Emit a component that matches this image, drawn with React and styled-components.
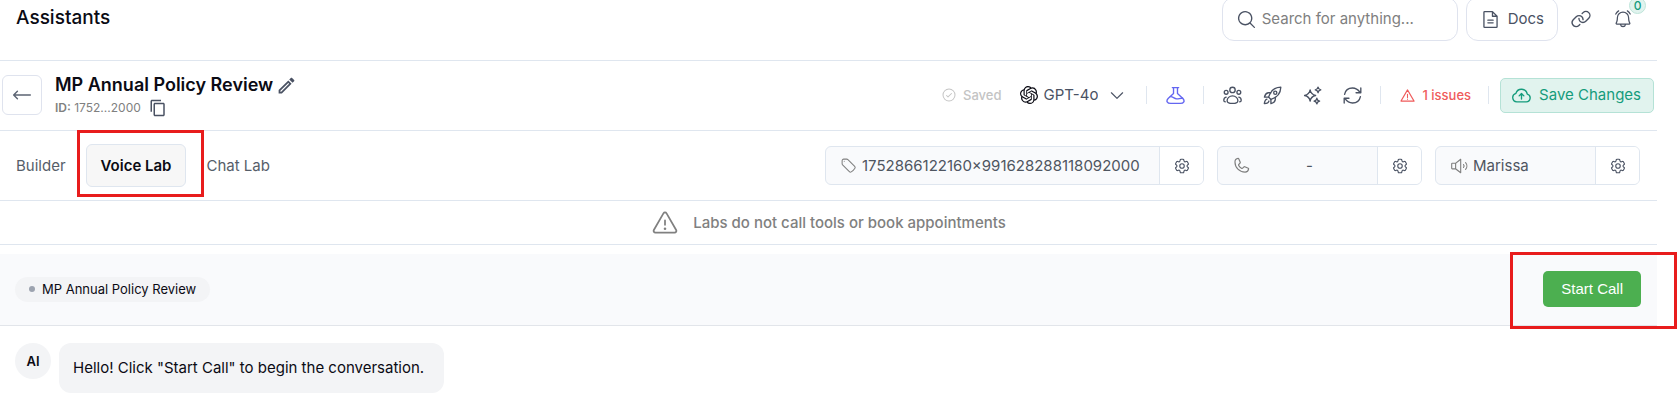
import styled, { createGlobalStyle, css } from "styled-components";
import { SiOpenai } from "react-icons/si";
import { MdContentCopy, MdOutlineEdit } from "react-icons/md";
import { HiOutlineCog6Tooth, HiOutlineTag } from "react-icons/hi2";
import {
  PiBellRinging,
  PiCaretDown,
  PiCheckCircle,
  PiFileText,
  PiLink,
  PiMagnifyingGlass,
  PiPhone,
  PiSpeakerHigh,
  PiWarning,
} from "react-icons/pi";

const GlobalStyle = createGlobalStyle`
  * {
    box-sizing: border-box;
  }

  body {
    margin: 0;
    background: #fff;
    color: #0b0b14;
    font-family: Inter, "Liberation Sans", sans-serif;
    font-size: 15px;
    line-height: 20px;
  }

  button, input, select {
    margin: 0;
    font: inherit;
    color: inherit;
  }

  svg {
    display: block;
    flex-shrink: 0;
  }
`;

const Page = styled.main`
  margin-right: 21px;
`;

// Red frame around the controls to click
const highlighted = css`
  position: relative;

  &::after {
    content: "";
    position: absolute;
    border: 3px solid #e81c1c;
    pointer-events: none;
  }
`;

// Top header, scrolled a little out of view
const Header = styled.header`
  display: flex;
  align-items: center;
  gap: 8px;
  height: 83px;
  margin-top: -22px;
  padding: 0 24px 0 16px;
  border-bottom: 1px solid #dfe6ef;
`;

const PageTitle = styled.h1`
  flex: 1;
  margin: 0;
  padding-bottom: 2px;
  font-size: 19px;
  font-weight: 500;
`;

const SearchBox = styled.label`
  display: flex;
  align-items: center;
  gap: 5px;
  width: 236px;
  height: 44px;
  padding: 0 13px;
  border: 1px solid #dfe3ee;
  border-radius: 12px;
  color: #4a5263;
`;

const SearchInput = styled.input`
  flex: 1;
  min-width: 0;
  padding: 0;
  border: 0;
  outline: 0;
  background: none;

  &::placeholder {
    color: #808080;
    opacity: 1;
  }
`;

const DocsLink = styled.a`
  display: flex;
  align-items: center;
  gap: 7px;
  height: 44px;
  padding: 0 13px;
  border: 1px solid #dfe3ee;
  border-radius: 12px;
  color: #4a5263;
  text-decoration: none;
`;

const HeaderIcons = styled.div`
  display: flex;
  align-items: center;
  gap: 21px;
  padding-left: 4px;
`;

const IconButton = styled.button`
  position: relative;
  padding: 0;
  border: 0;
  background: none;
  color: #4a5263;
  cursor: pointer;
`;

const Badge = styled.span`
  position: absolute;
  right: -13px;
  bottom: 15px;
  width: 17px;
  height: 17px;
  border: 1px solid #bfe5da;
  border-radius: 50%;
  background: #e1f3ee;
  color: #159c7c;
  font-size: 12px;
  font-weight: 500;
  line-height: 16px;
`;

// Assistant row
const AssistantBar = styled.section`
  display: flex;
  align-items: center;
  height: 70px;
  padding: 0 3px 1px 2px;
  border-bottom: 1px solid #dfe6ef;
`;

const BackButton = styled.button`
  display: grid;
  place-items: center;
  width: 40px;
  height: 40px;
  margin-right: 13px;
  padding: 0;
  border: 1px solid #dfe3ee;
  border-radius: 6px;
  background: #fff;
  color: #5c6473;
`;

const Identity = styled.div`
  flex: 1;
  padding-top: 2px;
`;

const NameLine = styled.div`
  display: flex;
  align-items: center;
  gap: 3px;
  height: 24px;
`;

const Name = styled.h2`
  margin: 0;
  font-size: 18px;
  font-weight: 600;
`;

const IdLine = styled.div`
  display: flex;
  align-items: center;
  gap: 8px;
  height: 22px;
  color: #808080;
  font-size: 12px;

  b {
    font-weight: 600;
  }
`;

const Tools = styled.div`
  display: flex;
  align-items: center;
`;

const Saved = styled.span`
  display: flex;
  align-items: center;
  gap: 6px;
  margin-right: 19px;
  color: #c4c4c4;
  font-size: 13px;
  font-weight: 500;
`;

const ModelPicker = styled.label`
  display: flex;
  align-items: center;
  gap: 5px;
  padding-right: 12px;
  color: #4a5263;
`;

const ModelSelect = styled.select`
  appearance: none;
  padding: 0 5px 0 0;
  border: 0;
  background: none;
`;

const Divider = styled.span`
  width: 1px;
  height: 18px;
  margin: 0 8px;
  background: #dfe6ef;
`;

const ToolButton = styled.button`
  display: grid;
  place-items: center;
  width: 40px;
  height: 36px;
  padding: 0;
  border: 0;
  background: none;
  color: ${({ $color }) => $color || "#4a5263"};
  cursor: pointer;
`;

const Issues = styled.button`
  display: flex;
  align-items: center;
  gap: 7px;
  padding: 0 9px 0 11px;
  border: 0;
  background: none;
  color: #ef5b5b;
  font-size: 13px;
  font-weight: 500;
`;

const SaveButton = styled.button`
  display: flex;
  align-items: center;
  gap: 8px;
  height: 35px;
  margin-left: 3px;
  padding: 0 12px 0 11px;
  border: 1px solid #b5e2d6;
  border-radius: 5px;
  background: #e1f3ee;
  color: #159c7c;
`;

// Tabs row
const TabBar = styled.section`
  display: flex;
  align-items: center;
  justify-content: space-between;
  height: 70px;
  padding: 0 17px 0 16px;
  border-bottom: 1px solid #dfe6ef;
`;

const Tabs = styled.nav`
  display: flex;
  align-items: center;
  gap: 20px;
`;

const Tab = styled.button`
  padding: 0;
  border: 0;
  background: none;
  color: #565e69;
`;

const ActiveTab = styled.button`
  ${highlighted}
  height: 43px;
  padding: 0 14px;
  border: 1px solid #dfe6ef;
  border-radius: 6px;
  background: #f7f7f7;
  font-weight: 600;

  &::after {
    inset: -15px -19px -11px -10px;
  }
`;

const Fields = styled.div`
  display: flex;
  gap: 13px;
`;

const Field = styled.div`
  display: flex;
  height: 39px;
  border: 1px solid #dfe6ef;
  border-radius: 6px;
  background: #f9fafc;
  color: #4e5560;
  overflow: hidden;
`;

const FieldValue = styled.div`
  display: flex;
  align-items: center;
  gap: 5px;
  min-width: ${({ $wide }) => ($wide ? "333px" : "159px")};
  padding: 0 14px;

  svg {
    color: #808080;
  }

  span {
    flex: 1;
    text-align: ${({ $align }) => $align || "left"};
  }
`;

const FieldButton = styled.button`
  display: grid;
  place-items: center;
  width: 44px;
  padding: 0;
  border: 0;
  border-left: 1px solid #dfe6ef;
  background: #fff;
  color: #4a5263;
`;

const Notice = styled.p`
  display: flex;
  align-items: center;
  justify-content: center;
  gap: 14px;
  height: 44px;
  margin: 0;
  border-bottom: 1px solid #dfe6ef;
  color: #808080;
  font-weight: 500;
`;

// Call area
const CallBar = styled.section`
  display: flex;
  align-items: center;
  justify-content: space-between;
  height: 72px;
  margin-top: 9px;
  padding: 0 16px 1px 15px;
  border-bottom: 1px solid #e2e5ea;
  background: #f9fafc;
`;

const Chip = styled.span`
  display: flex;
  align-items: center;
  gap: 7px;
  height: 25px;
  padding: 0 14px;
  border-radius: 13px;
  background: #f3f4f6;
  font-size: 13px;

  &::before {
    content: "";
    width: 6px;
    height: 6px;
    border-radius: 50%;
    background: #9ca3af;
  }
`;

const StartButton = styled.button`
  ${highlighted}
  height: 36px;
  padding: 0 18px;
  border: 0;
  border-radius: 5px;
  background: #4caf50;
  color: #fff;
  font-family: "Liberation Sans", Arial, sans-serif;

  &::after {
    inset: -19px -36px -22px -33px;
  }
`;

const Message = styled.div`
  display: flex;
  align-items: flex-start;
  gap: 8px;
  padding: 17px 15px;
`;

const Avatar = styled.span`
  display: grid;
  place-items: center;
  width: 36px;
  height: 36px;
  border-radius: 50%;
  background: #f3f4f6;
  font-size: 13px;
  font-weight: 600;
`;

const Bubble = styled.p`
  margin: 0;
  padding: 15px 20px 15px 14px;
  border-radius: 12px;
  background: #f3f4f6;
`;

const Icon = ({ size = 19, children }) => (
  <svg
    width={size}
    height={size}
    viewBox="0 0 24 24"
    fill="none"
    stroke="currentColor"
    strokeWidth="1.7"
    strokeLinecap="round"
    strokeLinejoin="round"
  >
    {children}
  </svg>
);

const BackIcon = () => (
  <Icon size={20}>
    <path d="M22 12H2.500M6.500 7.500 2 12l4.500 4.500" />
  </Icon>
);

const FlaskIcon = () => (
  <Icon>
    <path d="M8 2h8M9.500 2v7.500L3 15.500C-.500 19 1.500 22 6 22h12c4.500 0 6.500-3 3-6.500l-6.500-6V2" />
    <path d="M5.500 13.500c3-.5 4.500 2.500 8 2.800 3 .2 4-1.300 7.500-.8" />
  </Icon>
);

const TeamIcon = () => (
  <Icon>
    <circle cx="12" cy="5" r="3.400" />
    <circle cx="4" cy="8" r="2.400" />
    <circle cx="20" cy="8" r="2.400" />
    <path d="M12 12.500c-4 0-6.800 3-6.800 6 0 2.800 2.500 3.500 6.800 3.500s6.800-.7 6.800-3.500c0-3-2.800-6-6.800-6z" />
    <path d="M4 14c-2 .5-3 2-3 4 0 1.200.6 2 2 2M20 14c2 .5 3 2 3 4 0 1.200-.6 2-2 2" />
  </Icon>
);

const RocketIcon = () => (
  <Icon>
    <path d="M7 14C9.500 6 15 1.800 22.500 1.500c-.3 7.500-4.500 13-12.500 15.500z" />
    <circle cx="15.500" cy="8.500" r="2" />
    <path d="M10 8.500H6.500C4 9 2.500 11 1.800 14H7M15.500 14v3.500c-.5 2.500-2.500 4-5.500 4.700V17" />
    <path d="M5 16.500c-2 .5-3 2.500-3.300 5.800 3.300-.3 5.300-1.300 5.800-3.300" />
  </Icon>
);

const SparklesIcon = () => (
  <Icon>
    <path d="M9 5c.8 4.500 2.500 6.200 7 7-4.500.8-6.200 2.500-7 7-.8-4.500-2.500-6.200-7-7 4.500-.8 6.200-2.500 7-7z" />
    <path d="M19 1.500c.4 2.200 1.300 3.100 3.500 3.500-2.200.4-3.100 1.300-3.500 3.500-.4-2.200-1.300-3.100-3.500-3.500 2.200-.4 3.100-1.300 3.500-3.500zM17.500 15.500c.4 2.200 1.300 3.100 3.500 3.500-2.200.4-3.100 1.300-3.500 3.500-.4-2.200-1.300-3.100-3.500-3.500 2.200-.4 3.100-1.300 3.500-3.500z" />
  </Icon>
);

const RefreshIcon = () => (
  <Icon>
    <path d="M2 10.500C3 5.500 7 2.500 12 2.500c4 0 7 2 9.500 5.500M22.500 2.500v6h-6" />
    <path d="M22 13.500c-1 5-5 8-10 8-4 0-7-2-9.500-5.500M1.500 21.500v-6h6" />
  </Icon>
);

const CloudIcon = () => (
  <Icon>
    <path d="M6 20h12a5 5 0 0 0 1.300-9.800A7.400 7.400 0 0 0 5 9.200 5.500 5.500 0 0 0 6 20z" />
    <path d="M12 16.500V10M9 12.500l3-3 3 3" />
  </Icon>
);

const IssueIcon = () => (
  <Icon size={15}>
    <path d="M12 3 1.500 21h21zM12 10v5M12 17.500v.5" />
  </Icon>
);

function SettingField({ icon, value, align, wide, label }) {
  return (
    <Field>
      <FieldValue $align={align} $wide={wide}>
        {icon}
        <span>{value}</span>
      </FieldValue>
      <FieldButton aria-label={label}>
        <HiOutlineCog6Tooth size={18} />
      </FieldButton>
    </Field>
  );
}

function App() {
  return (
    <>
      <GlobalStyle />
      <Page>
        <Header>
          <PageTitle>Assistants</PageTitle>
          <SearchBox>
            <PiMagnifyingGlass size={21} />
            <SearchInput type="text" aria-label="Search" placeholder="Search for anything..." />
          </SearchBox>
          <DocsLink href="#docs">
            <PiFileText size={21} />
            Docs
          </DocsLink>
          <HeaderIcons>
            <IconButton aria-label="Copy link">
              <PiLink size={22} />
            </IconButton>
            <IconButton aria-label="Notifications">
              <PiBellRinging size={20} />
              <Badge>0</Badge>
            </IconButton>
          </HeaderIcons>
        </Header>

        <AssistantBar>
          <BackButton aria-label="Back">
            <BackIcon />
          </BackButton>
          <Identity>
            <NameLine>
              <Name>MP Annual Policy Review</Name>
              <IconButton aria-label="Rename">
                <MdOutlineEdit size={21} />
              </IconButton>
            </NameLine>
            <IdLine>
              <span>
                <b>ID:</b> 1752...2000
              </span>
              <IconButton aria-label="Copy ID">
                <MdContentCopy size={18} />
              </IconButton>
            </IdLine>
          </Identity>
          <Tools>
            <Saved>
              <PiCheckCircle size={16} />
              Saved
            </Saved>
            <ModelPicker>
              <SiOpenai size={18} color="#0b0b14" />
              <ModelSelect aria-label="Model">
                <option>GPT-4o</option>
              </ModelSelect>
              <PiCaretDown size={18} />
            </ModelPicker>
            <Divider />
            <ToolButton $color="#6366f1" aria-label="Lab">
              <FlaskIcon />
            </ToolButton>
            <Divider />
            <ToolButton aria-label="Team">
              <TeamIcon />
            </ToolButton>
            <ToolButton aria-label="Deploy">
              <RocketIcon />
            </ToolButton>
            <ToolButton aria-label="Enhance">
              <SparklesIcon />
            </ToolButton>
            <ToolButton aria-label="Refresh">
              <RefreshIcon />
            </ToolButton>
            <Divider />
            <Issues>
              <IssueIcon />1 issues
            </Issues>
            <Divider />
            <SaveButton>
              <CloudIcon />
              Save Changes
            </SaveButton>
          </Tools>
        </AssistantBar>

        <TabBar>
          <Tabs>
            <Tab>Builder</Tab>
            <ActiveTab>Voice Lab</ActiveTab>
            <Tab>Chat Lab</Tab>
          </Tabs>
          <Fields>
            <SettingField
              icon={<HiOutlineTag size={17} />}
              value="1752866122160×991628288118092000"
              wide
              label="Tag settings"
            />
            <SettingField
              icon={<PiPhone size={19} />}
              value="-"
              align="center"
              label="Phone settings"
            />
            <SettingField
              icon={<PiSpeakerHigh size={18} />}
              value="Marissa"
              label="Voice settings"
            />
          </Fields>
        </TabBar>

        <Notice>
          <PiWarning size={28} />
          Labs do not call tools or book appointments
        </Notice>

        <CallBar>
          <Chip>MP Annual Policy Review</Chip>
          <StartButton>Start Call</StartButton>
        </CallBar>

        <Message>
          <Avatar>AI</Avatar>
          <Bubble>Hello! Click "Start Call" to begin the conversation.</Bubble>
        </Message>
      </Page>
    </>
  );
}

export default App;
